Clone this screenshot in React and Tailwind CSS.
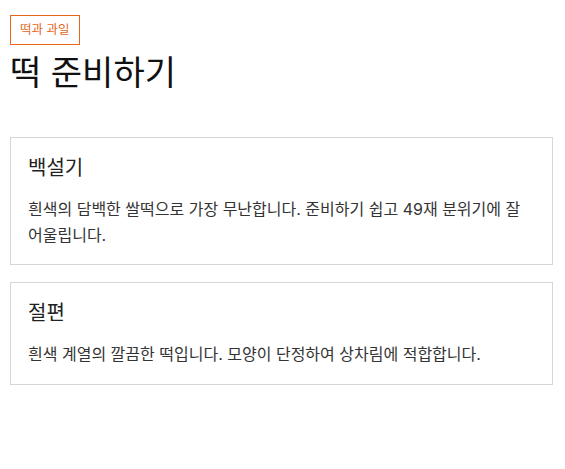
export default function App() {
  const font = { fontFamily: 'Inter, "Noto Sans CJK KR", sans-serif' };
  return (
    <div className="min-h-[469px] bg-white pl-[10px] pr-[12px] pt-[15px]" style={font}>
      <span className="inline-block border border-[#e6671a] px-[9px] py-[5px] text-[12.5px] leading-[18px] text-[#e6671a]">
        떡과 과일
      </span>
      <h1 className="mt-[4px] text-[34px] leading-[48px] font-normal text-[#111]">떡 준비하기</h1>
      <div className="mt-[40px] flex flex-col gap-[17px]">
        <div className="border border-[#d6d6d6] px-[17px] pt-[14px] pb-[16px]">
          <h2 className="text-[20px] leading-[32px] text-[#222]">백설기</h2>
          <p className="mt-[13px] text-[16px] leading-[25.5px] text-[#333]">
            흰색의 담백한 쌀떡으로 가장 무난합니다. 준비하기 쉽고 49재 분위기에 잘 어울립니다.
          </p>
        </div>
        <div className="border border-[#d6d6d6] px-[17px] pt-[14px] pb-[16px]">
          <h2 className="text-[20px] leading-[32px] text-[#222]">절편</h2>
          <p className="mt-[13px] text-[16px] leading-[25.5px] text-[#333]">
            흰색 계열의 깔끔한 떡입니다. 모양이 단정하여 상차림에 적합합니다.
          </p>
        </div>
      </div>
    </div>
  );
}
